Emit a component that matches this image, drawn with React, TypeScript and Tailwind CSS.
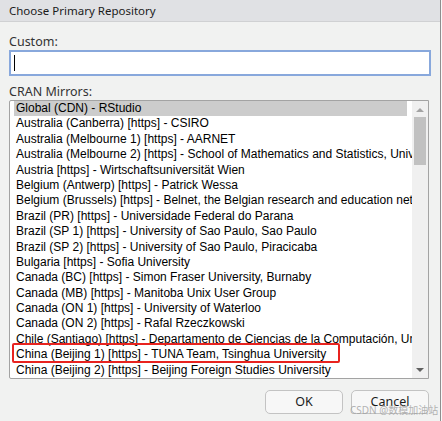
import React from 'react'

const mirrors = [
  'Global (CDN) - RStudio',
  'Australia (Canberra) [https] - CSIRO',
  'Australia (Melbourne 1) [https] - AARNET',
  'Australia (Melbourne 2) [https] - School of Mathematics and Statistics, University of Melbourne',
  'Austria [https] - Wirtschaftsuniversität Wien',
  'Belgium (Antwerp) [https] - Patrick Wessa',
  'Belgium (Brussels) [https] - Belnet, the Belgian research and education network',
  'Brazil (PR) [https] - Universidade Federal do Parana',
  'Brazil (SP 1) [https] - University of Sao Paulo, Sao Paulo',
  'Brazil (SP 2) [https] - University of Sao Paulo, Piracicaba',
  'Bulgaria [https] - Sofia University',
  'Canada (BC) [https] - Simon Fraser University, Burnaby',
  'Canada (MB) [https] - Manitoba Unix User Group',
  'Canada (ON 1) [https] - University of Waterloo',
  'Canada (ON 2) [https] - Rafal Rzeczkowski',
  'Chile (Santiago) [https] - Departamento de Ciencias de la Computación, Universidad de Chile',
  'China (Beijing 1) [https] - TUNA Team, Tsinghua University',
  'China (Beijing 2) [https] - Beijing Foreign Studies University',
]

export default function App() {
  return (
    <div className="relative w-[442px] h-[421px] overflow-hidden bg-[#f8f8f8] font-['Noto_Sans','Open_Sans',sans-serif]">
      <div className="w-[441px] h-[421px] bg-[#f1f2f1] border-r border-[#8e8e8e] flex flex-col">
        {/* title bar */}
        <div className="h-[22px] shrink-0 bg-[#e0e1e4] border-b border-[#d0d1d3] flex items-center pl-[9px] text-[11.5px] text-[#1b1b1b]">
          Choose Primary Repository
        </div>

        <div className="flex flex-col pl-[9px] pr-[9px]">
          <div className="mt-[11px] h-[17px] leading-[17px] text-[12.5px] text-[#333]">Custom:</div>
          <div className="h-[26px] w-[422px] bg-white border-2 border-[#88a8dc] flex items-center pl-[3px]">
            <div className="w-px h-[16px] bg-black" />
          </div>

          <div className="mt-[7px] h-[17px] leading-[17px] text-[12.5px] text-[#333]">CRAN Mirrors:</div>
          <div className="relative h-[279px] w-[420px] bg-white border border-[#a3a3a3] rounded-tl-[2px] rounded-bl-[2px] flex overflow-hidden font-['Liberation_Sans',Arial,sans-serif] text-[12px] text-black">
            <div className="w-[402px] overflow-hidden pl-1">
              {mirrors.map((m, i) => (
                <div
                  key={m}
                  className={`h-[15.4px] leading-[15.4px] whitespace-nowrap pl-[2px] ${i === 0 ? 'w-[393px] bg-[#cccccc]' : ''}`}
                >
                  {m}
                </div>
              ))}
            </div>
            {/* scrollbar */}
            <div className="w-[16px] bg-[#f0f0f0] flex flex-col items-center">
              <div className="h-[16px] flex items-center justify-center">
                <svg width="8" height="5" viewBox="0 0 8 5"><path d="M0 5 L4 1 L8 5 Z" fill="#a3a3a3" /></svg>
              </div>
              <div className="w-[12px] h-[48px] bg-[#c1c1c1]" />
              <div className="flex-1" />
              <div className="h-[16px] flex items-center justify-center">
                <svg width="8" height="5" viewBox="0 0 8 5"><path d="M0 0 L4 4 L8 0 Z" fill="#606060" /></svg>
              </div>
            </div>
            {/* highlight drawn over the list */}
            <div className="absolute left-[2px] top-[242px] w-[328px] h-[20px] border-2 border-[#e8231f] rounded-[2px] pointer-events-none" />
          </div>

          <div className="flex justify-end gap-2 mt-[11px] pr-[2px]">
            <button className="w-[78px] h-[24px] rounded-[5px] border border-[#c3c3c3] bg-[#f7f7f7] text-[12.5px] text-[#1b1b1b]">OK</button>
            <button className="w-[78px] h-[24px] rounded-[5px] border border-[#c3c3c3] bg-[#f7f7f7] text-[12.5px] text-[#1b1b1b]">Cancel</button>
          </div>
        </div>
      </div>
      <div className="absolute left-[350px] top-[403px] leading-[14px] text-[10px] text-[#a0a0a0]/80 whitespace-nowrap font-['Noto_Sans','Noto_Sans_CJK_SC',sans-serif] pointer-events-none">
        CSDN @数模加油站
      </div>
    </div>
  )
}
